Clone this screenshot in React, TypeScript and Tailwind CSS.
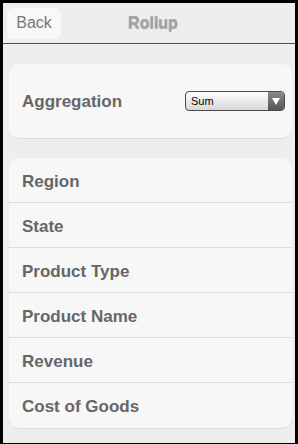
import React from "react";

const fields = ["Region", "State", "Product Type", "Product Name", "Revenue", "Cost of Goods"];

const font = { fontFamily: '"Liberation Sans", Arial, sans-serif' };

export default function App() {
  return (
    <div className="w-[298px] h-[444px] bg-black pt-[3px] px-[3px] pb-[1px]" style={font}>
      <div className="h-full bg-[#eeeeee] flex flex-col">
        <div className="h-[41px] flex items-center border-b border-[#4a5264]">
          <button className="ml-[4px] w-[54px] h-[31px] rounded-[6px] bg-[#f8f8f8] text-[#777777] text-[16px] leading-none">
            Back
          </button>
          <div className="flex-1 pr-[50px] text-center text-[16px] font-bold text-[#a3a3a3] [text-shadow:0_1px_1px_rgba(0,0,0,0.35)]">
            Rollup
          </div>
        </div>

        <div className="mt-[20px] ml-[6px] mr-[3px] h-[75px] rounded-[10px] bg-[#f7f7f7] border-b border-[#dddddd] flex items-center justify-between pl-[13px] pr-[7px]">
          <span className="pt-[2px] text-[17px] font-bold text-[#666666]">Aggregation</span>
          <div className="w-[100px] h-[20px] flex rounded-[4px] border border-[#4a4a4a] overflow-hidden bg-gradient-to-b from-[#ffffff] to-[#d8d8d8]">
            <span className="flex-1 text-[11px] text-black pl-[5px] leading-[18px]">Sum</span>
            <span className="w-[16px] flex items-center justify-center bg-gradient-to-b from-[#8a8a8a] to-[#555555]">
              <svg width="8" height="7" viewBox="0 0 8 7">
                <path d="M0 0 L8 0 L4 7 Z" fill="#ffffff" />
              </svg>
            </span>
          </div>
        </div>

        <div className="mt-[19px] ml-[6px] mr-[3px] rounded-[10px] bg-[#f7f7f7] border-b border-[#dddddd] flex flex-col">
          {fields.map((f, i) => (
            <div
              key={f}
              className={`h-[45px] flex items-center pl-[13px] pt-[3px] text-[17px] font-bold text-[#666666] ${
                i < fields.length - 1 ? "border-b border-[#dcdcdc]" : ""
              }`}
            >
              {f}
            </div>
          ))}
        </div>
      </div>
    </div>
  );
}
